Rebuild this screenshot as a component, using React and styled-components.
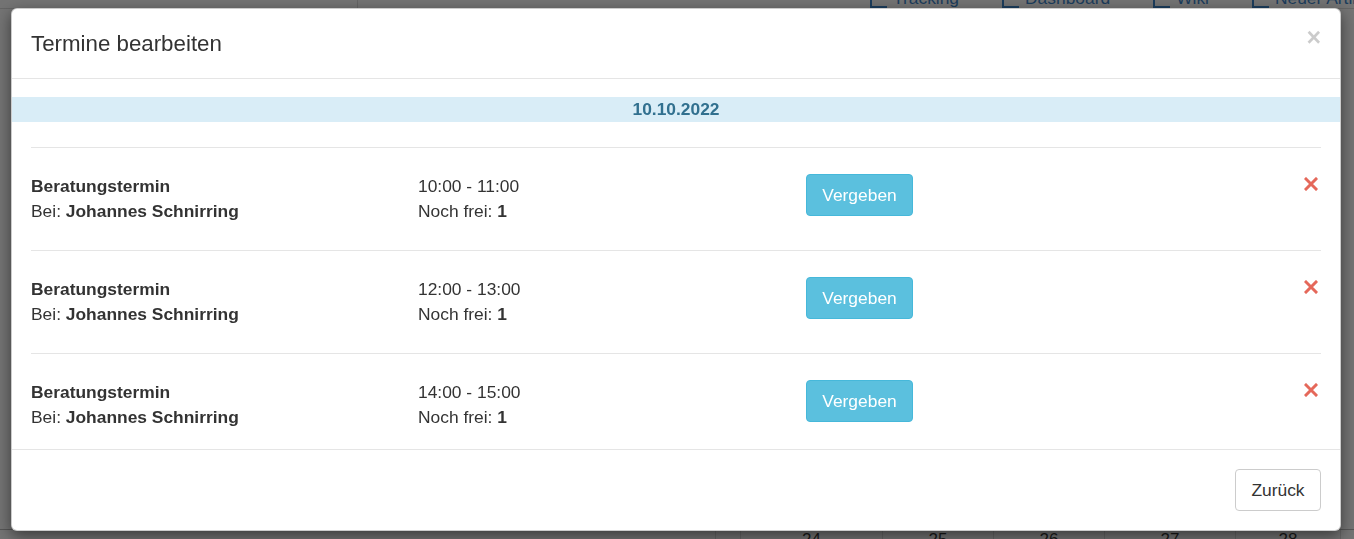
import React from 'react';
import styled, { createGlobalStyle } from 'styled-components';

const GlobalStyle = createGlobalStyle`
  html, body {
    margin: 0;
    padding: 0;
    height: 100%;
    overflow: hidden;
  }
  body {
    font-family: "Liberation Sans", Arial, sans-serif;
    font-size: 17.4px;
    color: #333;
    background: #747474;
  }
`;

/* dimmed page behind the modal */
const Page = styled.div`
  height: 539px;
  display: flex;
  flex-direction: column;
  justify-content: space-between;
  background: #747474;
`;

const TopBar = styled.div`
  height: 8px;
  display: flex;
  border-bottom: 1px solid #656565;
`;

const SideHead = styled.div`
  width: 357px;
  border-right: 1px solid #656565;
`;

const Nav = styled.nav`
  flex: 1;
  display: flex;
  gap: 43px;
  margin-top: -12px;
  padding-left: 512px;
  overflow: hidden;
`;

const NavLink = styled.span`
  display: flex;
  align-items: flex-end;
  color: #1c3d5c;
  font-size: 17.4px;
  line-height: 20px;
  white-space: nowrap;
`;

const NavIcon = styled.span`
  display: inline-block;
  width: 17px;
  height: 14px;
  margin-right: 6px;
  border-bottom: 2px solid #1c3d5c;
  border-left: 2px solid #1c3d5c;
  box-sizing: border-box;
`;

const Calendar = styled.div`
  height: 9px;
  display: grid;
  grid-template-columns: 715px 25px 142px 111px 111px 131px 105px 1fr;
  border-top: 1px solid #555;
  overflow: hidden;
`;

const CalCell = styled.div`
  border-left: 1px solid #666;
  text-align: center;
  color: #1a1a1a;
  font-size: 17px;
  line-height: 16px;
  padding-top: 2px;
`;

/* modal */
const Overlay = styled.div`
  position: fixed;
  inset: 0;
  display: flex;
  align-items: flex-start;
  padding: 8px 0 0 11px;
`;

const Modal = styled.div`
  width: 1330px;
  background: #fff;
  border-radius: 6px;
  box-shadow: 0 5px 15px rgba(0, 0, 0, 0.5);
  border: 1px solid rgba(0, 0, 0, 0.2);
  box-sizing: border-box;
`;

const Header = styled.div`
  display: flex;
  justify-content: space-between;
  align-items: center;
  padding: 20px 19px;
  border-bottom: 1px solid #e5e5e5;
`;

const Title = styled.h4`
  margin: 0;
  font-size: 22.3px;
  font-weight: normal;
  line-height: 29px;
  color: #333;
`;

const Close = styled.span`
  font-size: 25px;
  font-weight: bold;
  line-height: 1;
  color: #000;
  opacity: 0.2;
  margin-top: -12px;
`;

const Body = styled.div`
  padding: 18px 0 0;
`;

const DateBar = styled.div`
  background: #d9edf7;
  color: #31708f;
  font-weight: bold;
  text-align: center;
  line-height: 25px;
  margin-bottom: 25px;
`;

const List = styled.div`
  padding: 0 19px;
`;

const Row = styled.div`
  display: grid;
  grid-template-columns: 387px 388px 1fr auto;
  align-items: start;
  border-top: 1px solid #e5e5e5;
  padding: 26px 0;
  &:last-child {
    padding-bottom: 19px;
  }
`;

const Cell = styled.div`
  line-height: 25px;
`;

const Strong = styled.b`
  font-weight: bold;
`;

const Button = styled.button`
  font-family: inherit;
  font-size: 17.4px;
  line-height: 22px;
  padding: 9px 0;
  border-radius: 4px;
  cursor: pointer;
  border: 1px solid ${(p) => (p.$info ? '#46b8da' : '#ccc')};
  background: ${(p) => (p.$info ? '#5bc0de' : '#fff')};
  color: ${(p) => (p.$info ? '#fff' : '#333')};
  width: ${(p) => p.$w || 'auto'};
`;

const Remove = styled.span`
  display: block;
  margin-top: 1px;
  margin-right: 3px;
  width: 14px;
  height: 14px;
`;

const Footer = styled.div`
  display: flex;
  justify-content: flex-end;
  padding: 19px;
  border-top: 1px solid #e5e5e5;
`;

const RemoveIcon = () => (
  <svg width="14" height="14" viewBox="0 0 14 14">
    <path d="M2 2 L12 12 M12 2 L2 12" stroke="#e5685a" strokeWidth="3" strokeLinecap="square" />
  </svg>
);

const slots = [
  { time: '10:00 - 11:00' },
  { time: '12:00 - 13:00' },
  { time: '14:00 - 15:00' },
];

const App = () => {
  return (
    <>
      <GlobalStyle />
      <Page>
        <TopBar>
          <SideHead />
          <Nav>
            <NavLink><NavIcon />Tracking</NavLink>
            <NavLink><NavIcon />Dashboard</NavLink>
            <NavLink><NavIcon />Wiki</NavLink>
            <NavLink><NavIcon />Neuer Artikel</NavLink>
          </Nav>
        </TopBar>
        <Calendar>
          <div />
          <CalCell />
          <CalCell>24</CalCell>
          <CalCell>25</CalCell>
          <CalCell>26</CalCell>
          <CalCell>27</CalCell>
          <CalCell>28</CalCell>
          <CalCell />
        </Calendar>
      </Page>

      <Overlay>
        <Modal>
          <Header>
            <Title>Termine bearbeiten</Title>
            <Close>×</Close>
          </Header>
          <Body>
            <DateBar>10.10.2022</DateBar>
            <List>
              {slots.map((s) => (
                <Row key={s.time}>
                  <Cell>
                    <Strong>Beratungstermin</Strong>
                    <br />
                    Bei: <Strong>Johannes Schnirring</Strong>
                  </Cell>
                  <Cell>
                    {s.time}
                    <br />
                    Noch frei: <Strong>1</Strong>
                  </Cell>
                  <div>
                    <Button $info $w="107px">Vergeben</Button>
                  </div>
                  <Remove>
                    <RemoveIcon />
                  </Remove>
                </Row>
              ))}
            </List>
          </Body>
          <Footer>
            <Button $w="86px">Zurück</Button>
          </Footer>
        </Modal>
      </Overlay>
    </>
  );
};

export default App;
